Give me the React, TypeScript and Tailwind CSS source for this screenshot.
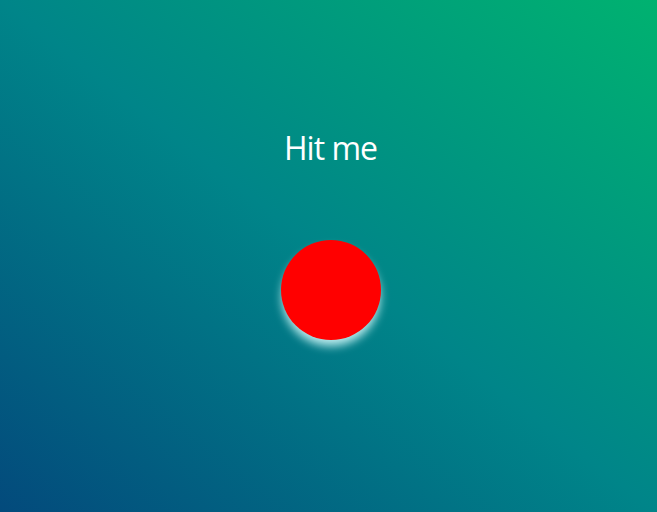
export default function App() {
  return (
    <div className="min-h-screen w-full bg-[linear-gradient(to_top_right,#034a7c_0%,#008589_50%,#00b270_100%)] flex flex-col items-center pt-[124px] pl-[4px]">
      <h1 className="text-[32px] leading-[48px] text-white font-['Open_Sans',sans-serif] tracking-[-1px]">
        Hit me
      </h1>
      <button
        type="button"
        className="mt-[68px] h-[100px] w-[100px] rounded-full bg-[#ff0000] shadow-[0_7px_10px_-1px_rgba(220,255,255,0.85)] cursor-pointer"
        aria-label="Hit me"
      />
    </div>
  );
}
